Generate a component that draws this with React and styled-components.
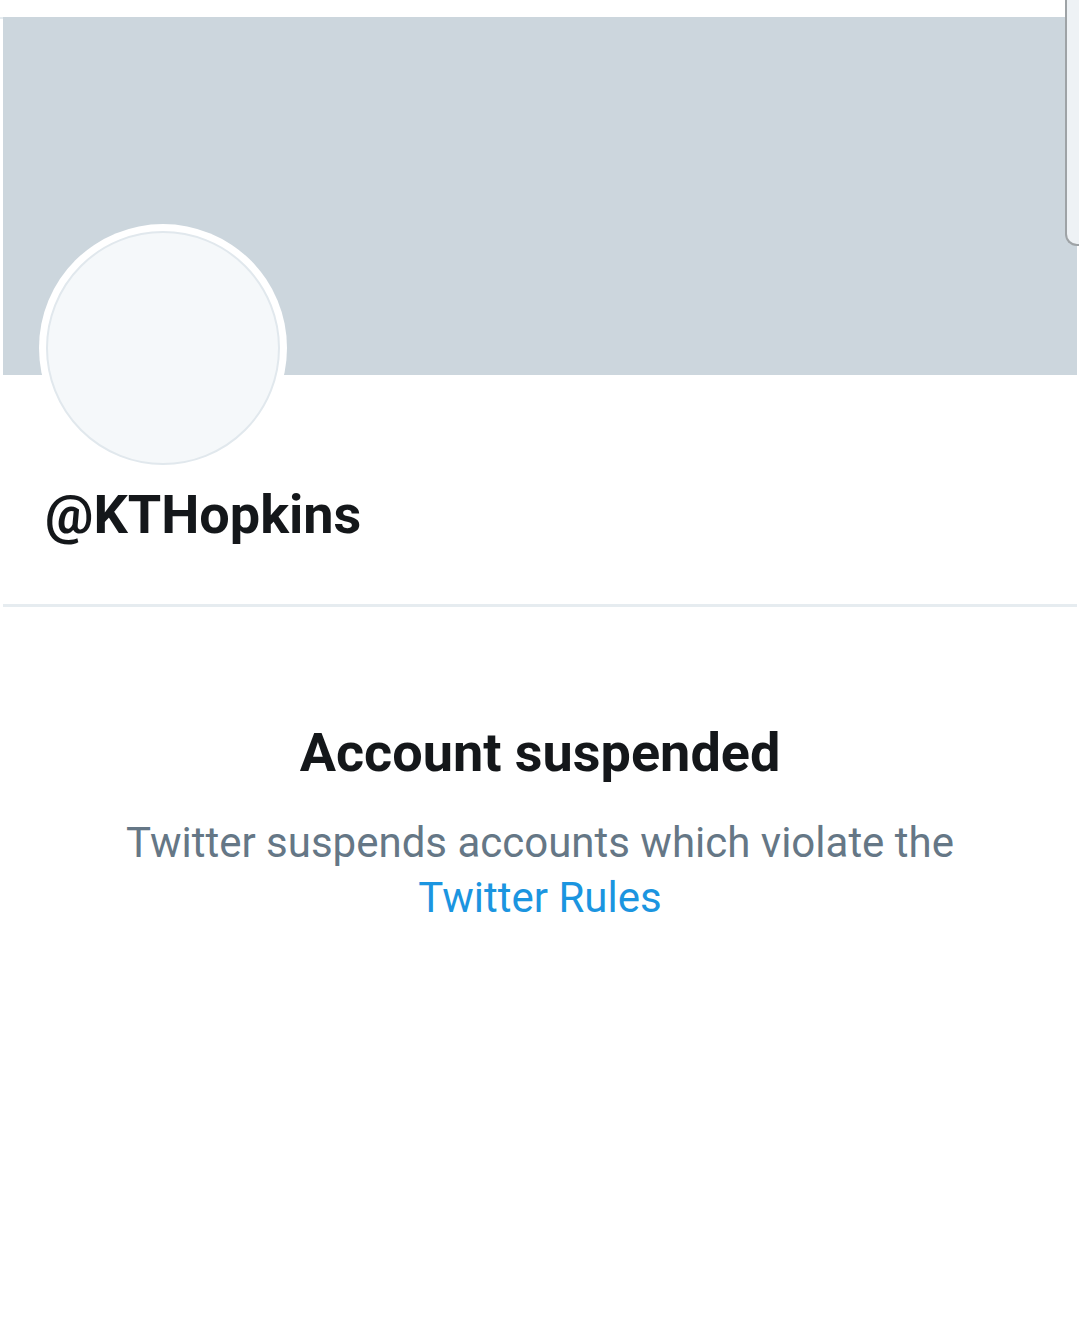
import React from "react";
import styled, { createGlobalStyle } from "styled-components";

const GlobalStyle = createGlobalStyle`
    html, body {
        margin: 0;
        padding: 0;
        background: #ffffff;
    }

    body {
        font-family: Roboto, "Liberation Sans", sans-serif;
    }
`;

const Page = styled.div`
    position: relative;
    width: 1079px;
    min-height: 1318px;
    padding-top: 17px;
    box-sizing: border-box;
    overflow: hidden;
`;

const TopRule = styled.div`
    height: 2px;
    margin-right: 14px;
    background: #e6ecf0;
`;

const Profile = styled.div`
    margin: -2px 2px 0 3px;
`;

const Banner = styled.div`
    height: 358px;
    background: #ccd6dd;
`;

const AvatarRing = styled.div`
    width: 248px;
    height: 248px;
    margin: -151px 0 0 36px;
    border-radius: 50%;
    background: #ffffff;
    display: flex;
    align-items: center;
    justify-content: center;
`;

const Avatar = styled.div`
    width: 230px;
    height: 230px;
    border-radius: 50%;
    border: 2px solid #e1e8ed;
    background: #f5f8fa;
`;

const Handle = styled.h1`
    margin: 10px 0 0 42px;
    font-size: 54px;
    line-height: 66px;
    font-weight: 700;
    color: #14171a;
    letter-spacing: 0;
`;

const Divider = styled.hr`
    margin: 56px 0 0;
    height: 3px;
    border: none;
    background: #e6ecf0;
`;

const Notice = styled.section`
    display: flex;
    flex-direction: column;
    align-items: center;
    padding-top: 114px;
    text-align: center;
`;

const NoticeTitle = styled.h2`
    margin: 0;
    font-size: 54px;
    line-height: 64px;
    font-weight: 700;
    color: #14171a;
`;

const NoticeText = styled.p`
    margin: 30px 0 0;
    max-width: 900px;
    font-size: 42px;
    line-height: 55px;
    font-weight: 400;
    color: #657786;
`;

const RulesLink = styled.a`
    color: #1b95e0;
    text-decoration: none;
`;

const EdgePanel = styled.div`
    position: absolute;
    top: 0;
    right: 0;
    width: 12px;
    height: 244px;
    border-left: 2px solid #9ea3a6;
    border-bottom: 2px solid #9ea3a6;
    border-bottom-left-radius: 12px;
    background: #eef2f5;
`;

function App() {
    return (
        <>
            <GlobalStyle />
            <Page>
                <TopRule />
                <Profile>
                    <Banner />
                    <AvatarRing>
                        <Avatar />
                    </AvatarRing>
                    <Handle>@KTHopkins</Handle>
                    <Divider />
                    <Notice>
                        <NoticeTitle>Account suspended</NoticeTitle>
                        <NoticeText>
                            Twitter suspends accounts which violate the{" "}
                            <RulesLink href="#">Twitter Rules</RulesLink>
                        </NoticeText>
                    </Notice>
                </Profile>
                <EdgePanel />
            </Page>
        </>
    );
}

export default App;
